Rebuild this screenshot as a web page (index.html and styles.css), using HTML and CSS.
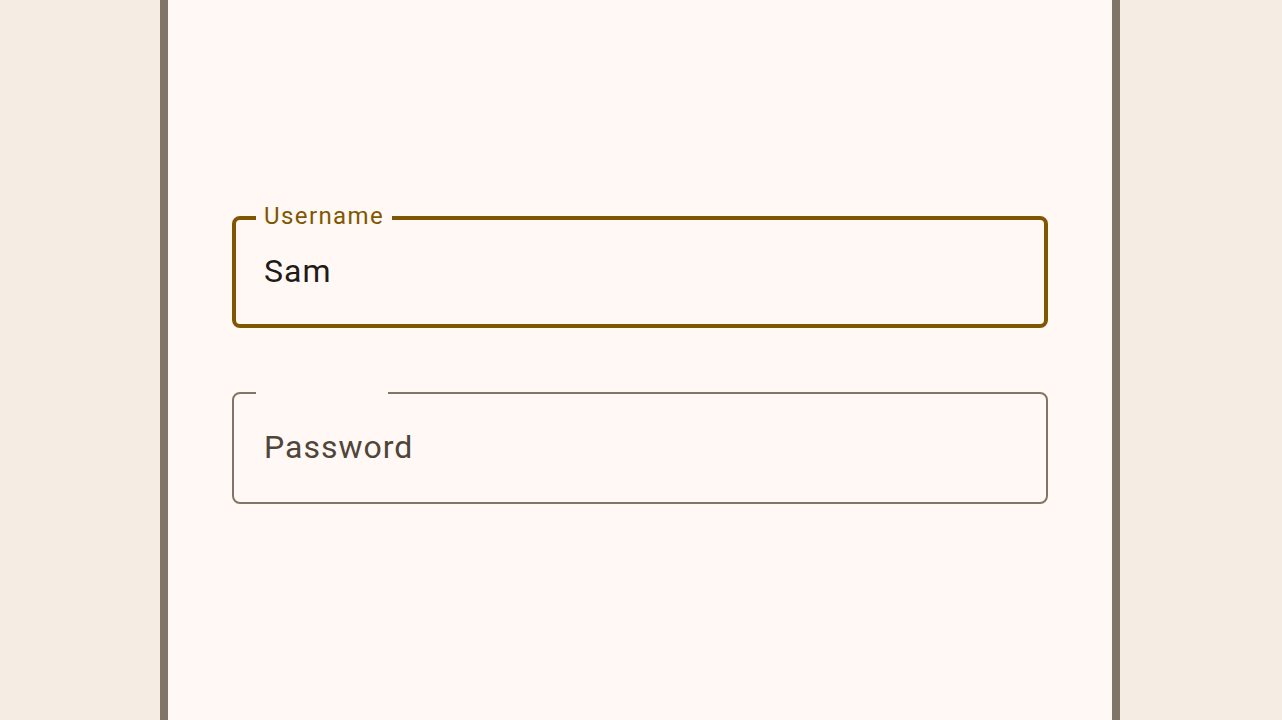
FILE: index.html
```html
<!DOCTYPE html>
<html lang="en">
<head>
<meta charset="utf-8">
<title>Sign in</title>
<link rel="stylesheet" href="styles.css">
</head>
<body>
<div class="page">
  <main class="frame">
    <div class="field field--focused">
      <span class="field__label">Username</span>
      <span class="field__value">Sam</span>
    </div>
    <div class="field">
      <span class="field__notch"></span>
      <span class="field__placeholder">Password</span>
    </div>
  </main>
</div>
</body>
</html>
```

FILE: styles.css
```css
html, body {
  margin: 0;
  padding: 0;
  height: 100%;
}

body {
  background: #f5ece3;
  font-family: Roboto, "Noto Sans", "Liberation Sans", sans-serif;
  overflow: hidden;
}

.page {
  height: 100%;
  padding-left: 160px;
}

.frame {
  box-sizing: border-box;
  width: 960px;
  height: 100%;
  background: #fff8f5;
  border-left: 8px solid #817567;
  border-right: 8px solid #817567;
  padding: 0 64px;
  display: flex;
  flex-direction: column;
  justify-content: center;
  gap: 64px;
}

.field {
  position: relative;
  box-sizing: border-box;
  height: 112px;
  border: 2px solid #817567;
  border-radius: 8px;
  padding: 0 30px 2px;
  display: flex;
  align-items: center;
  font-size: 32px;
  line-height: 48px;
  letter-spacing: 1px;
}

.field--focused {
  border: 4px solid #7f5700;
  padding: 0 28px 2px;
}

.field__label {
  position: absolute;
  left: 20px;
  top: -20px;
  padding: 0 8px;
  background: #fff8f5;
  color: #7f5700;
  font-size: 24px;
  line-height: 32px;
  letter-spacing: 1.4px;
}

.field__notch {
  position: absolute;
  left: 22px;
  top: -4px;
  width: 132px;
  height: 6px;
  background: #fff8f5;
}

.field__value {
  color: #1f1b16;
}

.field__placeholder {
  color: #4f4539;
}
```
